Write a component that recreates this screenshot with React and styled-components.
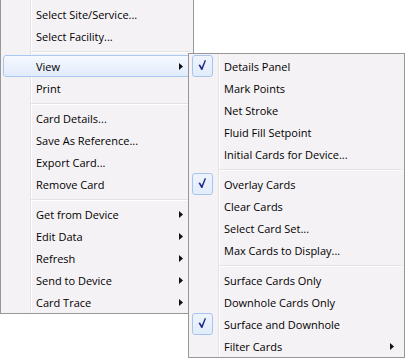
import styled, { createGlobalStyle } from 'styled-components';

const GlobalStyle = createGlobalStyle`
  html, body {
    margin: 0;
    padding: 0;
    background: #fff;
  }
  body {
    font-family: "Open Sans", "Noto Sans", sans-serif;
  }
`;

const Screen = styled.div`
  position: relative;
  width: 405px;
  height: 360px;
  overflow: hidden;
  background: #fff;
`;

const Menu = styled.div`
  position: absolute;
  left: ${({ $left }) => $left}px;
  top: ${({ $top }) => $top}px;
  width: ${({ $width }) => $width}px;
  box-sizing: border-box;
  display: flex;
  flex-direction: column;
  padding: ${({ $padTop }) => $padTop}px 2px 0;
  border: 1px solid #979797;
  background-color: #f5f2f5;
  background-image: linear-gradient(
    to right,
    transparent 29px,
    #e2e3e3 29px,
    #e2e3e3 30px,
    #ffffff 30px,
    #ffffff 31px,
    transparent 31px
  );
  font-size: 11px;
  color: #000;
`;

const Item = styled.div`
  display: flex;
  align-items: center;
  height: 22px;
  box-sizing: border-box;
  padding-right: 7px;
  border: 1px solid ${({ $hot }) => ($hot ? '#a9c8ef' : 'transparent')};
  border-radius: 3px;
  background: ${({ $hot }) => ($hot ? 'linear-gradient(#f6f9fe, #e1ebfb)' : 'transparent')};
`;

const Gutter = styled.span`
  flex: none;
  width: 32px;
  height: 22px;
  margin: -1px 0;
  display: flex;
  align-items: center;
`;

const CheckBox = styled.span`
  width: 21px;
  height: 22px;
  box-sizing: border-box;
  border: 1px solid #a7c4ec;
  border-radius: 3px;
  background: linear-gradient(#eef4fd, #e2ecfa);
  display: flex;
`;

const Label = styled.span`
  flex: 1;
  white-space: nowrap;
  line-height: 15px;
`;

const Separator = styled.div`
  height: 8px;
  margin-left: 28px;
  background:
    linear-gradient(#e2e3e3, #e2e3e3) 0 4px / 100% 1px no-repeat,
    linear-gradient(#ffffff, #ffffff) 0 5px / 100% 1px no-repeat;
`;

const Check = () => (
  <svg width="19" height="20" viewBox="1 1 19 20">
    <path d="M6.5 10 L8 9.6 L9.8 12.3 L12.8 5 L14 5.4 L10.4 15 L9.3 15 Z" fill="#1c2a8a" />
  </svg>
);

const Arrow = () => (
  <svg width="4" height="7" viewBox="0 0 4 7">
    <polygon points="0,0 4,3.5 0,7" fill="#111" />
  </svg>
);

const mainItems = [
  { label: 'Select Site/Service...' },
  { label: 'Select Facility...' },
  '-',
  { label: 'View', sub: true, hot: true },
  { label: 'Print' },
  '-',
  { label: 'Card Details...' },
  { label: 'Save As Reference...' },
  { label: 'Export Card...' },
  { label: 'Remove Card' },
  '-',
  { label: 'Get from Device', sub: true },
  { label: 'Edit Data', sub: true },
  { label: 'Refresh', sub: true },
  { label: 'Send to Device', sub: true },
  { label: 'Card Trace', sub: true },
];

const viewItems = [
  { label: 'Details Panel', checked: true },
  { label: 'Mark Points' },
  { label: 'Net Stroke' },
  { label: 'Fluid Fill Setpoint' },
  { label: 'Initial Cards for Device...' },
  '-',
  { label: 'Overlay Cards', checked: true },
  { label: 'Clear Cards' },
  { label: 'Select Card Set...' },
  { label: 'Max Cards to Display...' },
  '-',
  { label: 'Surface Cards Only' },
  { label: 'Downhole Cards Only' },
  { label: 'Surface and Downhole', checked: true },
  { label: 'Filter Cards', sub: true },
];

const MenuItems = ({ items }) =>
  items.map((item, i) =>
    item === '-' ? (
      <Separator key={i} />
    ) : (
      <Item key={i} $hot={item.hot}>
        <Gutter>
          {item.checked && (
            <CheckBox>
              <Check />
            </CheckBox>
          )}
        </Gutter>
        <Label>{item.label}</Label>
        {item.sub && <Arrow />}
      </Item>
    )
  );

const App = () => (
  <Screen>
    <GlobalStyle />
    <Menu $left={0} $top={-1} $width={194} $padTop={3}>
      <MenuItems items={mainItems} />
    </Menu>
    <Menu $left={188} $top={53} $width={217} $padTop={1}>
      <MenuItems items={viewItems} />
    </Menu>
  </Screen>
);

export default App;
